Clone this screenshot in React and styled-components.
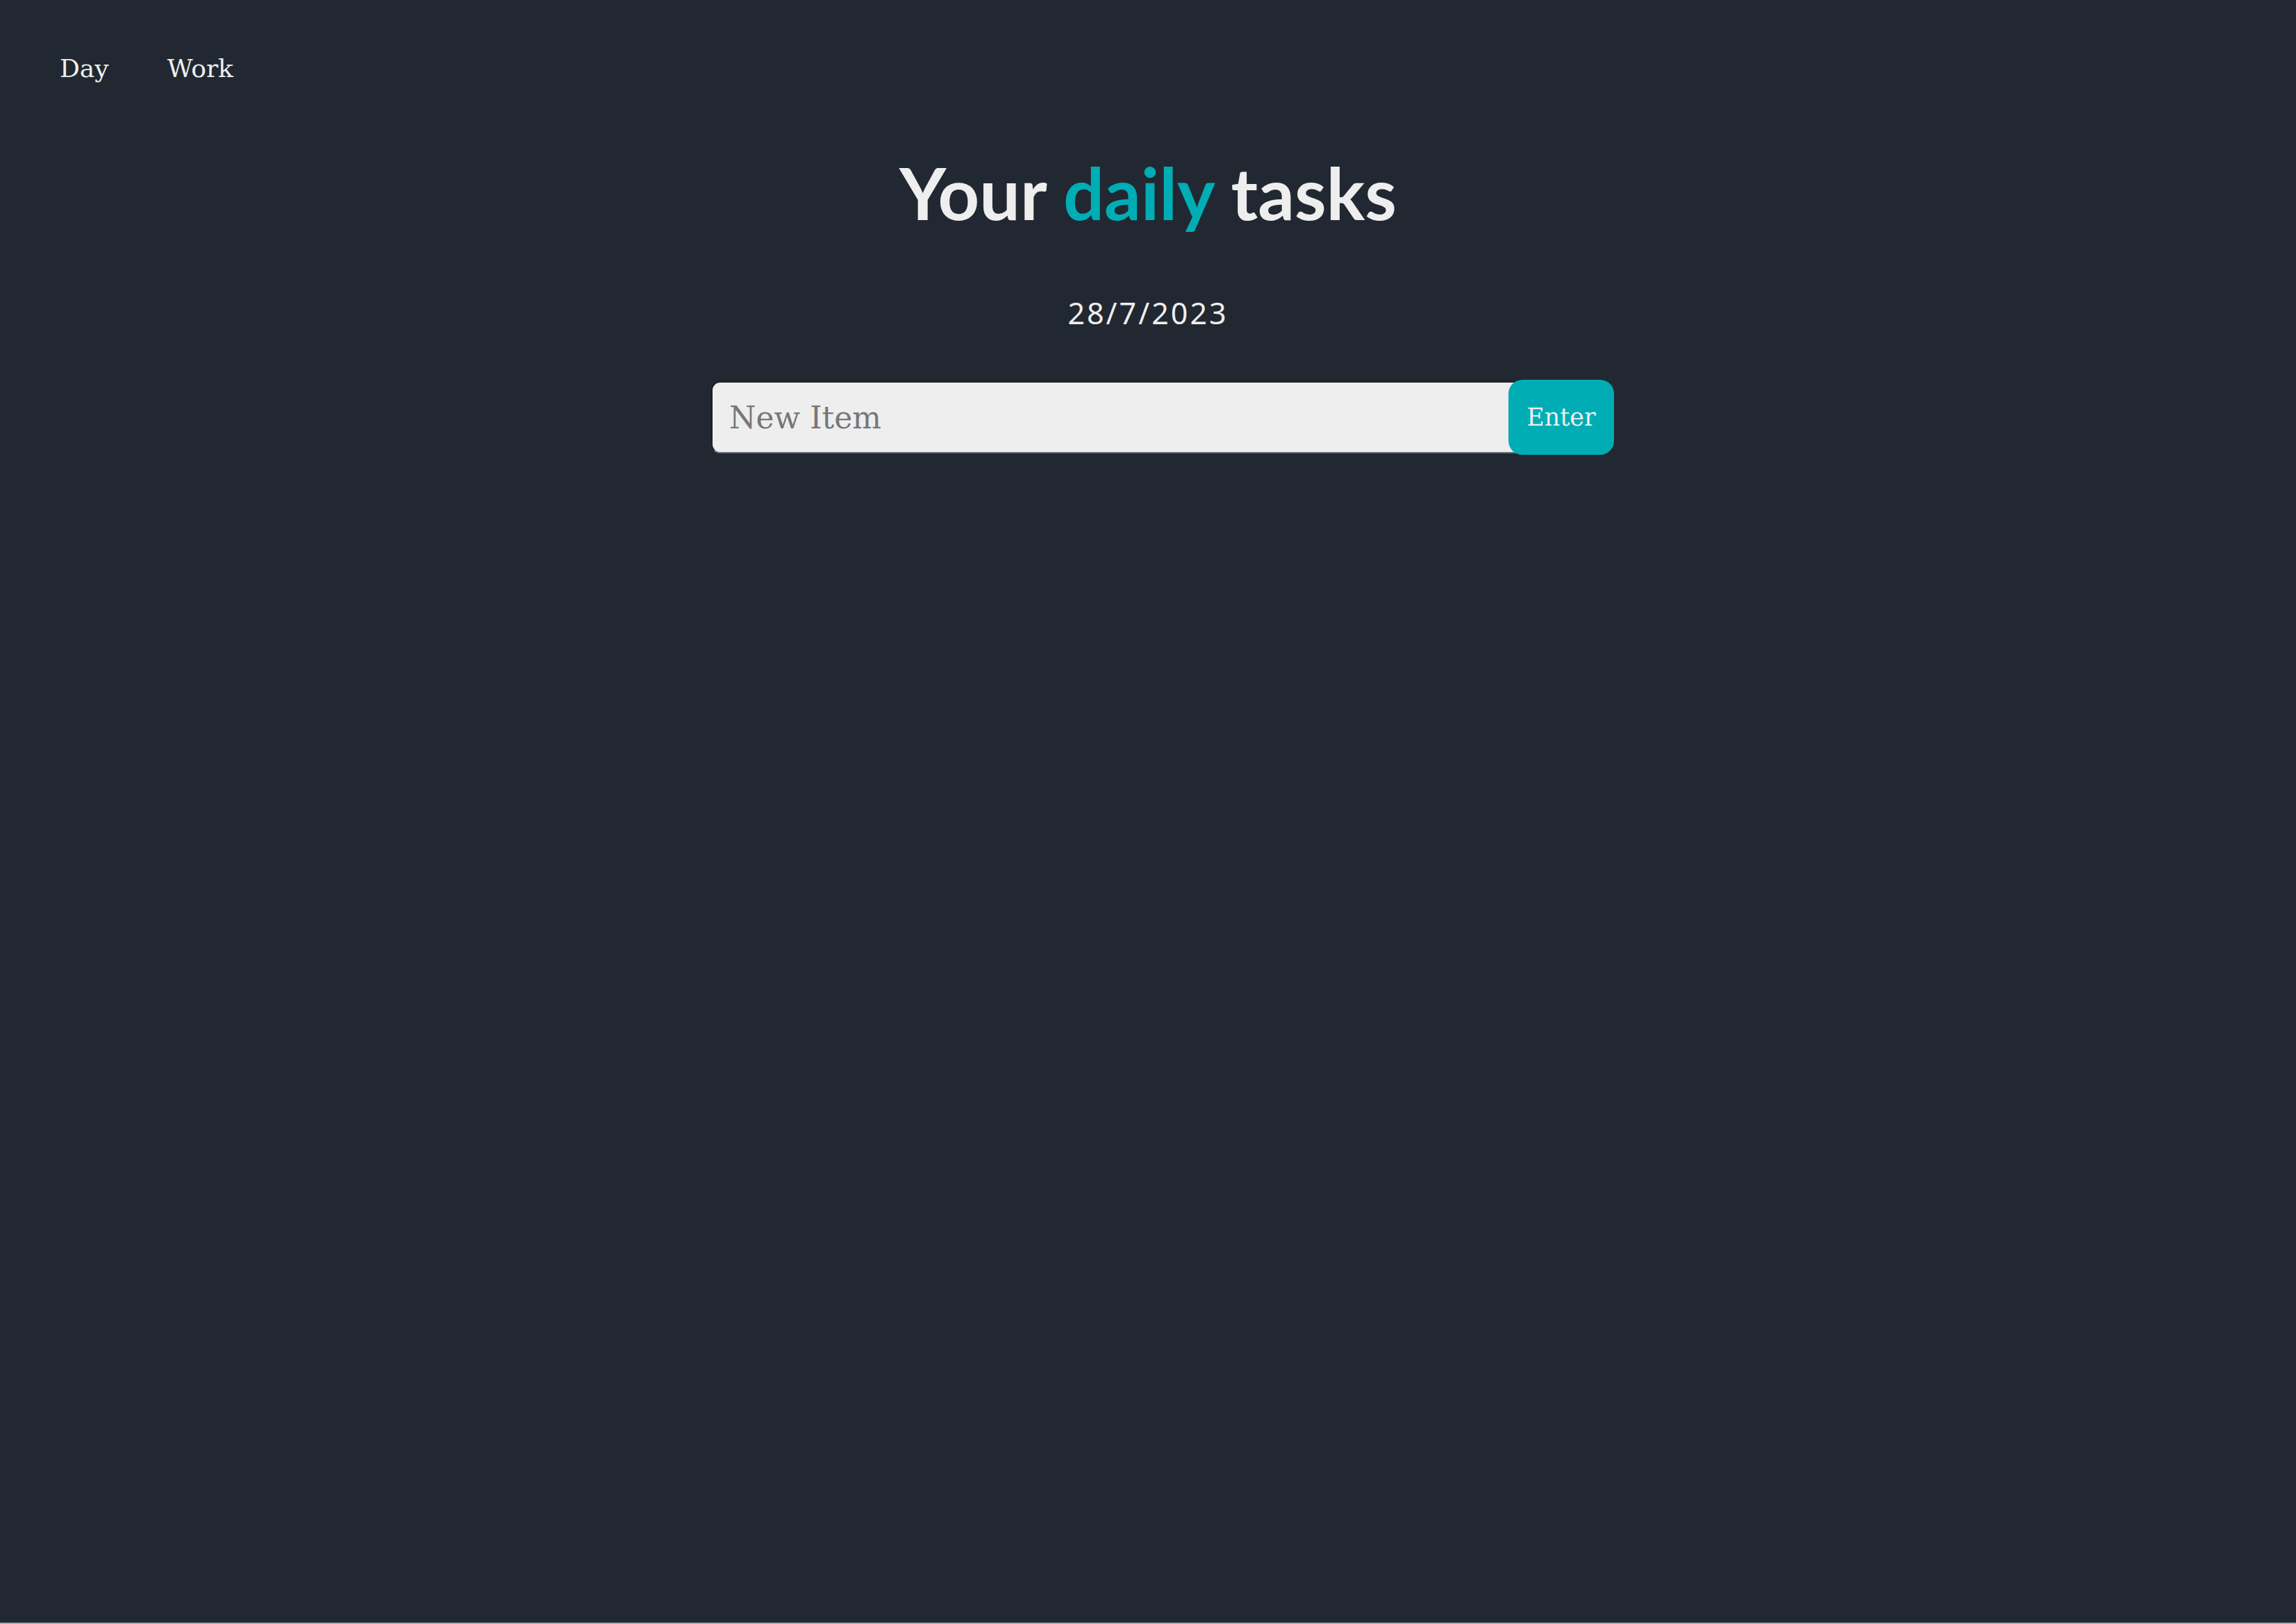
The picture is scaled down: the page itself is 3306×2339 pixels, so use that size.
import React, { useState } from 'react';
import styled, { createGlobalStyle } from 'styled-components';

const GlobalStyle = createGlobalStyle`
  html, body {
    margin: 0;
    padding: 0;
    background: #a9acb0;
  }
  * {
    box-sizing: border-box;
  }
`;

const Page = styled.div`
  min-height: calc(100vh - 2px);
  background: #222831;
  color: #eeeeee;
  display: flex;
  flex-direction: column;
`;

const Nav = styled.nav`
  display: flex;
  gap: 84px;
  padding: 78px 0 0 86px;
`;

const NavLink = styled.a`
  font-family: "DejaVu Serif", serif;
  font-size: 36px;
  line-height: 42px;
  color: #eeeeee;
  text-decoration: none;
  cursor: pointer;
`;

const Title = styled.h1`
  margin: 95px 0 0;
  font-family: "Lato", "Noto Sans", sans-serif;
  font-weight: 700;
  font-size: 104px;
  line-height: 1.2;
  text-align: center;
  color: #eeeeee;
`;

const Accent = styled.span`
  color: #00adb5;
`;

const DateLine = styled.p`
  margin: 85px 0 0;
  font-family: "Noto Sans", sans-serif;
  font-size: 43px;
  line-height: 1.2;
  letter-spacing: 3px;
  text-align: center;
  color: #eeeeee;
`;

const Form = styled.form`
  display: flex;
  justify-content: center;
  align-items: center;
  margin-top: 71px;
`;

const ItemInput = styled.input`
  width: 1258px;
  height: 104px;
  padding: 0 24px;
  border: 2px inset #6a6f76;
  border-radius: 13px;
  background: #eeeeee;
  font-family: "DejaVu Serif", serif;
  font-size: 44px;
  color: #222831;
  outline: none;

  &::placeholder {
    color: #777777;
  }
`;

const EnterButton = styled.button`
  width: 152px;
  height: 108px;
  margin-left: -110px;
  margin-right: -42px;
  border: none;
  border-radius: 20px;
  background: #00adb5;
  color: #eeeeee;
  font-family: "DejaVu Serif", serif;
  font-size: 35px;
  cursor: pointer;
  position: relative;
`;

export default function App() {
  const [item, setItem] = useState('');
  const today = '28/7/2023';

  const handleSubmit = (e) => {
    e.preventDefault();   // no list yet, just clear the field
    setItem('');
  };

  return (
    <>
      <GlobalStyle />
      <Page>
        <Nav>
          <NavLink>Day</NavLink>
          <NavLink>Work</NavLink>
        </Nav>
        <Title>
          Your <Accent>daily</Accent> tasks
        </Title>
        <DateLine>{today}</DateLine>
        <Form onSubmit={handleSubmit}>
          <ItemInput
            type="text"
            placeholder="New Item"
            value={item}
            onChange={(e) => setItem(e.target.value)}
          />
          <EnterButton type="submit">Enter</EnterButton>
        </Form>
      </Page>
    </>
  );
}
